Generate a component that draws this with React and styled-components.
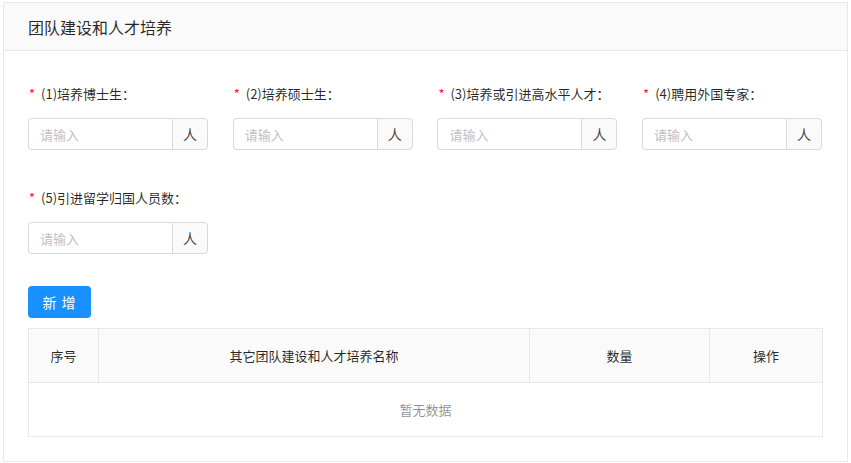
import React from 'react';
import styled, { createGlobalStyle } from 'styled-components';

const GlobalStyle = createGlobalStyle`
    body {
        margin: 0;
        background: #fff;
        font-family: "Noto Sans CJK SC", "Liberation Sans", sans-serif;
        color: rgba(0, 0, 0, 0.85);
    }
`;

const Page = styled.div`
    padding: 2px 3px;
`;

const Card = styled.section`
    width: 845px;
    box-sizing: border-box;
    border: 1px solid #e8e8e8;
    background: #fff;
`;

const CardHead = styled.header`
    height: 47px;
    display: flex;
    align-items: center;
    padding: 0 24px;
    background: #fafafa;
    border-bottom: 1px solid #e8e8e8;
    font-size: 16px;
    color: rgba(0, 0, 0, 0.85);
`;

const CardBody = styled.div`
    padding: 33px 24px 24px;
`;

const FormGrid = styled.div`
    display: grid;
    grid-template-columns: repeat(4, 204.7px);
    row-gap: 38px;
`;

const FormItem = styled.div`
    display: flex;
    flex-direction: column;
    gap: 14px;
`;

const Label = styled.label`
    height: 20px;
    line-height: 20px;
    font-size: 13px;
    color: rgba(0, 0, 0, 0.85);
    white-space: nowrap;

    &::before {
        content: '*';
        color: #f5222d;
        margin-right: 6px;
        margin-left: 1px;
    }
`;

const InputGroup = styled.div`
    display: flex;
    width: 180px;
    height: 32px;
    box-sizing: border-box;
`;

const Input = styled.input`
    flex: 1;
    min-width: 0;
    box-sizing: border-box;
    height: 32px;
    border: 1px solid #d9d9d9;
    border-right: none;
    border-radius: 4px 0 0 4px;
    padding: 0 11px;
    font-size: 13px;
    font-family: inherit;
    outline: none;

    &::placeholder {
        color: #bfbfbf;
    }
`;

const Addon = styled.span`
    width: 36px;
    box-sizing: border-box;
    display: flex;
    align-items: center;
    justify-content: center;
    border: 1px solid #d9d9d9;
    border-radius: 0 4px 4px 0;
    background: #fafafa;
    font-size: 14px;
    color: rgba(0, 0, 0, 0.75);
`;

const AddButton = styled.button`
    margin-top: 32px;
    width: 63px;
    height: 32px;
    border: none;
    border-radius: 4px;
    background: #1890ff;
    color: #fff;
    font-size: 14px;
    font-family: inherit;
    letter-spacing: 1px;
    cursor: pointer;
`;

const Table = styled.table`
    margin-top: 10px;
    width: 794px;
    border-collapse: collapse;
    table-layout: fixed;
    font-size: 13px;
    border: 1px solid #e8e8e8;

    th {
        height: 53px;
        background: #fafafa;
        font-weight: 400;
        color: rgba(0, 0, 0, 0.85);
        border-right: 1px solid #e8e8e8;
        border-bottom: 1px solid #e8e8e8;
        padding: 0;
    }

    td {
        height: 53px;
        padding: 0;
        text-align: center;
        color: rgba(0, 0, 0, 0.45);
        border-bottom: 1px solid #e8e8e8;
    }
`;

const fields = [
    '(1)培养博士生：',
    '(2)培养硕士生：',
    '(3)培养或引进高水平人才：',
    '(4)聘用外国专家：',
    '(5)引进留学归国人员数：',
];

export default function App() {
    return (
        <Page>
            <GlobalStyle />
            <Card>
                <CardHead>团队建设和人才培养</CardHead>
                <CardBody>
                    <FormGrid>
                        {fields.map((label) => (
                            <FormItem key={label}>
                                <Label>{label}</Label>
                                <InputGroup>
                                    <Input placeholder="请输入" />
                                    <Addon>人</Addon>
                                </InputGroup>
                            </FormItem>
                        ))}
                    </FormGrid>

                    <AddButton>新 增</AddButton>

                    <Table>
                        <colgroup>
                            <col style={{ width: 70 }} />
                            <col style={{ width: 431 }} />
                            <col style={{ width: 180 }} />
                            <col style={{ width: 113 }} />
                        </colgroup>
                        <thead>
                            <tr>
                                <th>序号</th>
                                <th>其它团队建设和人才培养名称</th>
                                <th>数量</th>
                                <th>操作</th>
                            </tr>
                        </thead>
                        <tbody>
                            <tr>
                                <td colSpan={4}>暂无数据</td>
                            </tr>
                        </tbody>
                    </Table>
                </CardBody>
            </Card>
        </Page>
    );
}
